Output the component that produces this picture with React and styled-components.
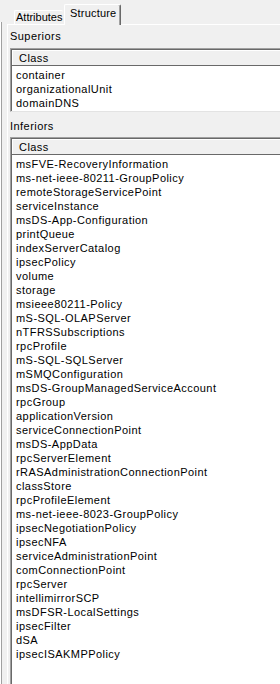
import styled, { createGlobalStyle } from "styled-components";

const superiors = ["container", "organizationalUnit", "domainDNS"];

const inferiors = [
  "msFVE-RecoveryInformation",
  "ms-net-ieee-80211-GroupPolicy",
  "remoteStorageServicePoint",
  "serviceInstance",
  "msDS-App-Configuration",
  "printQueue",
  "indexServerCatalog",
  "ipsecPolicy",
  "volume",
  "storage",
  "msieee80211-Policy",
  "mS-SQL-OLAPServer",
  "nTFRSSubscriptions",
  "rpcProfile",
  "mS-SQL-SQLServer",
  "mSMQConfiguration",
  "msDS-GroupManagedServiceAccount",
  "rpcGroup",
  "applicationVersion",
  "serviceConnectionPoint",
  "msDS-AppData",
  "rpcServerElement",
  "rRASAdministrationConnectionPoint",
  "classStore",
  "rpcProfileElement",
  "ms-net-ieee-8023-GroupPolicy",
  "ipsecNegotiationPolicy",
  "ipsecNFA",
  "serviceAdministrationPoint",
  "comConnectionPoint",
  "rpcServer",
  "intellimirrorSCP",
  "msDFSR-LocalSettings",
  "ipsecFilter",
  "dSA",
  "ipsecISAKMPPolicy",
];

function ClassList({ items, rows })
{
  return (
    <ListBox $rows={rows}>
      <Header>
        <HeaderCell>Class</HeaderCell>
      </Header>
      <Rows>
        {items.map((name) => (
          <Row key={name}>{name}</Row>
        ))}
      </Rows>
    </ListBox>
  );
}

function App()
{
  return (
    <Window>
      <GlobalStyle />
      <Splitter />
      <Main>
        <TabStrip>
          <Tab $width={49}>Attributes</Tab>
          <Tab $active $width={57}>Structure</Tab>
        </TabStrip>
        <Page>
          <Label>Superiors</Label>
          <ClassList items={superiors} rows={3} />
          <Label $gap>Inferiors</Label>
          <ClassList items={inferiors} />
        </Page>
      </Main>
    </Window>
  );
}

const GlobalStyle = createGlobalStyle`
  html, body {
    margin: 0;
    padding: 0;
    background: #f0f0f0;
    overflow: hidden;
  }
  body {
    font-family: "Liberation Sans", Arial, sans-serif;
    font-size: 11px;
    letter-spacing: 0.45px;
    color: #000;
  }
`;

const Window = styled.div`
  display: flex;
  width: 280px;
  height: 684px;
  overflow: hidden;
  background: #f0f0f0;
`;

const Splitter = styled.div`
  flex: none;
  box-sizing: border-box;
  width: 2px;
  margin-top: 22px;
  border-left: 1px solid #ffffff;
  border-right: 1px solid #a0a0a0;
`;

const Main = styled.div`
  flex: none;
  display: flex;
  flex-direction: column;
  width: 320px;
  height: 720px;
  padding-left: 3px;
`;

const TabStrip = styled.div`
  display: flex;
  align-items: flex-end;
  height: 24px;
  padding-left: 9px;
  position: relative;
  z-index: 1;
`;

const Tab = styled.div`
  box-sizing: border-box;
  width: ${(p) => p.$width}px;
  height: ${(p) => (p.$active ? "21px" : "14px")};
  margin-bottom: ${(p) => (p.$active ? "-1px" : "0")};
  padding: ${(p) => (p.$active ? "2px 0 0 5px" : "0 0 0 1px")};
  margin-left: ${(p) => (p.$active ? "1px" : "0")};
  background: #f0f0f0;
  border-top: 1px solid #ffffff;
  border-left: 1px solid #ffffff;
  border-right: ${(p) => (p.$active ? "1px solid #696969" : "none")};
  box-shadow: ${(p) => (p.$active ? "inset -1px 0 0 #a0a0a0" : "none")};
  border-radius: 2px 2px 0 0;
  line-height: 13px;
  letter-spacing: ${(p) => (p.$active ? "0.2px" : "0")};
  white-space: nowrap;
`;

const Page = styled.div`
  flex: 1;
  display: flex;
  flex-direction: column;
  margin-left: 2px;
  border-top: 1px solid #ffffff;
  border-left: 1px solid #ffffff;
  padding: 5px 0 0 2px;
`;

const Label = styled.div`
  height: 13px;
  line-height: 13px;
  margin-top: ${(p) => (p.$gap ? "8px" : "0")};
  margin-bottom: ${(p) => (p.$gap ? "4px" : "5px")};
`;

const ListBox = styled.div`
  box-sizing: border-box;
  display: flex;
  flex-direction: column;
  background: #ffffff;
  border-top: 1px solid #a0a0a0;
  border-left: 1px solid #a0a0a0;
  box-shadow: inset 1px 1px 0 #696969;
  border-bottom: 1px solid #e3e3e3;
  padding: 1px 0 0 1px;
  height: ${(p) => (p.$rows ? `${p.$rows * 14 + 22}px` : "auto")};
  flex: ${(p) => (p.$rows ? "none" : "1")};
`;

const Header = styled.div`
  flex: none;
  height: 16px;
  background: #f0f0f0;
  border-top: 1px solid #ffffff;
  border-bottom: 1px solid #696969;
  box-sizing: border-box;
  display: flex;
`;

const HeaderCell = styled.div`
  padding-left: 6px;
  line-height: 14px;
  border-left: 1px solid #ffffff;
`;

const Rows = styled.div`
  padding-top: 2px;
`;

const Row = styled.div`
  height: 14px;
  line-height: 14px;
  padding-left: 4px;
  white-space: nowrap;
`;

export default App;
